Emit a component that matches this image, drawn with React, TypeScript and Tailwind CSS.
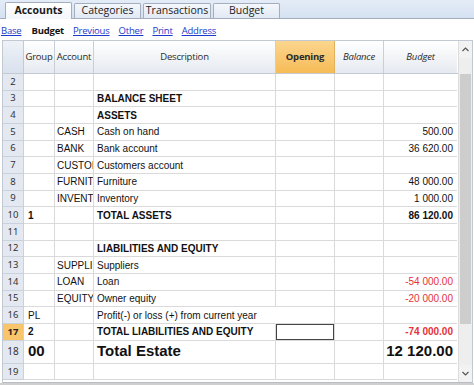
import React from "react";

type Row = {
  n: string;
  group?: string;
  account?: string;
  desc?: string;
  budget?: string;
  bold?: boolean;
  red?: boolean;
  big?: boolean;
  hl?: boolean;
  sel?: boolean;
  spill?: boolean;
};

const rows: Row[] = [
  { n: "2" },
  { n: "3", desc: "BALANCE SHEET", bold: true },
  { n: "4", desc: "ASSETS", bold: true },
  { n: "5", account: "CASH", desc: "Cash on hand", budget: "500.00" },
  { n: "6", account: "BANK", desc: "Bank account", budget: "36 620.00" },
  { n: "7", account: "CUSTOI", desc: "Customers account" },
  { n: "8", account: "FURNIT", desc: "Furniture", budget: "48 000.00" },
  { n: "9", account: "INVENT", desc: "Inventory", budget: "1 000.00" },
  { n: "10", group: "1", desc: "TOTAL ASSETS", budget: "86 120.00", bold: true },
  { n: "11" },
  { n: "12", desc: "LIABILITIES AND EQUITY", bold: true },
  { n: "13", account: "SUPPLI", desc: "Suppliers" },
  { n: "14", account: "LOAN", desc: "Loan", budget: "-54 000.00", red: true },
  { n: "15", account: "EQUITY", desc: "Owner equity", budget: "-20 000.00", red: true },
  { n: "16", group: "PL", desc: "Profit(-) or loss (+) from current year", spill: true },
  { n: "17", group: "2", desc: "TOTAL LIABILITIES AND EQUITY", budget: "-74 000.00", bold: true, red: true, hl: true, sel: true },
  { n: "18", group: "00", desc: "Total Estate", budget: "12 120.00", big: true },
  { n: "19" },
];

function Tab({ label, active, w }: { label: string; active?: boolean; w: string }) {
  return (
    <div
      className={
        active
          ? `${w} h-[17px] mt-[1px] flex items-center justify-center border border-b-0 border-[#a3aebf] rounded-t-[2px] bg-gradient-to-b from-white to-[#f3f6fb] font-bold text-[10.5px] text-[#1a1a1a] relative top-[1px]`
          : `${w} h-[15px] mt-[3px] flex items-center justify-center border border-b-0 border-[#a3aebf] rounded-t-[2px] bg-gradient-to-b from-[#f4f7fc] to-[#e2e9f4] text-[10.5px] text-[#222]`
      }
    >
      {label}
    </div>
  );
}

function GridRow({ r }: { r: Row }) {
  const h = r.big ? "h-[23.33px]" : "h-[16.67px]";
  const txt = r.big ? "text-[15px] font-bold" : r.bold ? "text-[10px] font-bold" : "text-[10px]";
  const color = r.red ? "text-[#e5323b]" : "text-[#111]";
  return (
    <div className={`flex ${h}`}>
      <div
        className={`w-[21px] shrink-0 flex items-center justify-center border-r border-b border-[#c9d1dd] ${
          r.hl ? "bg-[#f8c56b] font-bold text-[#222]" : "bg-[#e3e8f1] text-[#333]"
        } ${r.big ? "text-[10px]" : "text-[9.5px]"}`}
        style={{ fontFamily: '"Noto Sans", sans-serif' }}
      >
        {r.n}
      </div>
      <div
        className={`w-[31px] shrink-0 flex items-center pl-[4px] border-r border-b border-[#dadada] overflow-hidden whitespace-nowrap text-[#111] ${
          r.big ? "text-[15px] font-bold" : r.group && r.bold ? "text-[10px] font-bold" : "text-[10px]"
        }`}
      >
        {r.group}
      </div>
      <div className="w-[39px] shrink-0 flex items-center pl-[2px] border-r border-b border-[#dadada] overflow-hidden whitespace-nowrap text-[10px] text-[#111]">
        {r.account}
      </div>
      <div
        className={`w-[182px] shrink-0 flex items-center pl-[3px] border-b border-r ${
          r.spill ? "border-r-transparent overflow-visible" : "border-r-[#dadada] overflow-hidden"
        } border-b-[#dadada] whitespace-nowrap ${txt} text-[#111]`}
      >
        {r.desc}
      </div>
      <div className="w-[59px] shrink-0 border-r border-b border-[#dadada]">
        {r.sel && <div className="w-full h-full border-[1.5px] border-[#444]" />}
      </div>
      <div className="w-[49px] shrink-0 border-r border-b border-[#dadada]" />
      <div
        className={`w-[73px] shrink-0 flex items-center justify-end pr-[4px] border-b border-[#dadada] whitespace-nowrap ${txt} ${color}`}
      >
        {r.budget}
      </div>
    </div>
  );
}

export default function App() {
  const hdr = "shrink-0 border-r border-[#c9cfd8] flex items-center justify-center bg-gradient-to-b from-white to-[#e6eaf0]";
  return (
    <div
      className="w-[474px] h-[385px] bg-white overflow-hidden flex flex-col"
      style={{ fontFamily: '"Liberation Sans", Arial, sans-serif' }}
    >
      {/* Tab strip */}
      <div
        className="h-[19px] shrink-0 bg-gradient-to-b from-[#e4ecf7] to-[#d5e1f1] border-b border-[#a3aebf] flex items-start pl-[5px] gap-[2px]"
        style={{ fontFamily: '"Open Sans", sans-serif' }}
      >
        <Tab label="Accounts" active w="w-[67px]" />
        <Tab label="Categories" w="w-[67px]" />
        <Tab label="Transactions" w="w-[68px]" />
        <Tab label="Budget" w="w-[67px]" />
      </div>
      {/* Links */}
      <div
        className="h-[21px] shrink-0 flex items-center pt-[3px] gap-[9px] pl-[1px] text-[9.5px] tracking-[-0.2px]"
        style={{ fontFamily: '"Open Sans", sans-serif' }}
      >
        <span className="text-[#1c39c9] underline">Base</span>
        <span className="font-bold text-[#111] ml-[1px]">Budget</span>
        <span className="text-[#1c39c9] underline">Previous</span>
        <span className="text-[#1c39c9] underline">Other</span>
        <span className="text-[#1c39c9] underline">Print</span>
        <span className="text-[#1c39c9] underline">Address</span>
      </div>
      {/* Grid */}
      <div className="ml-[2px] w-[471px] h-[343px] shrink-0 border border-[#c3c9d2] border-b-[#b9bec6] flex">
        <div className="flex flex-col w-[455px]">
          <div
            className="flex h-[33px] shrink-0 border-b border-[#c3cad4] text-[9.5px] tracking-[-0.2px] text-[#2b2b2b]"
            style={{ fontFamily: '"Open Sans", sans-serif' }}
          >
            <div className="w-[21px] shrink-0 border-r border-[#c3cad4] bg-gradient-to-b from-[#eef2f8] to-[#d9e1ed]" />
            <div className={`w-[31px] font-medium ${hdr}`}>Group</div>
            <div className={`w-[39px] font-medium ${hdr}`}>Account</div>
            <div className={`w-[182px] font-medium ${hdr}`}>Description</div>
            <div className="w-[59px] shrink-0 border-r border-[#e2b15e] flex items-center justify-center font-bold text-[#2a2a2a] bg-gradient-to-b from-[#fbd68e] to-[#f6bb55]">
              Opening
            </div>
            <div className={`w-[49px] italic ${hdr}`}>Balance</div>
            <div className="w-[73px] shrink-0 flex items-center justify-center italic bg-gradient-to-b from-white to-[#e6eaf0]">
              Budget
            </div>
          </div>
          {rows.map((r) => (
            <GridRow key={r.n} r={r} />
          ))}
        </div>
        {/* Scrollbar */}
        <div className="w-[14px] shrink-0 border-l border-[#dcdcdc] bg-[#ececec] flex flex-col">
          <div className="h-[17px] shrink-0 flex items-center justify-center bg-[#f2f2f2]">
            <svg width="7" height="5" viewBox="0 0 7 5">
              <path d="M0.5 4 L3.5 1 L6.5 4" fill="none" stroke="#555" strokeWidth="1.2" />
            </svg>
          </div>
          <div className="flex-1 flex flex-col bg-[#eeeeee]">
            <div className="mt-[16px] h-[250px] mx-[1px] bg-[#cdcdcd]" />
          </div>
          <div className="h-[17px] shrink-0 flex items-center justify-center bg-[#f2f2f2]">
            <svg width="7" height="5" viewBox="0 0 7 5">
              <path d="M0.5 1 L3.5 4 L6.5 1" fill="none" stroke="#555" strokeWidth="1.2" />
            </svg>
          </div>
        </div>
      </div>
      <div className="flex-1 bg-[#cfcfcf]" />
    </div>
  );
}
